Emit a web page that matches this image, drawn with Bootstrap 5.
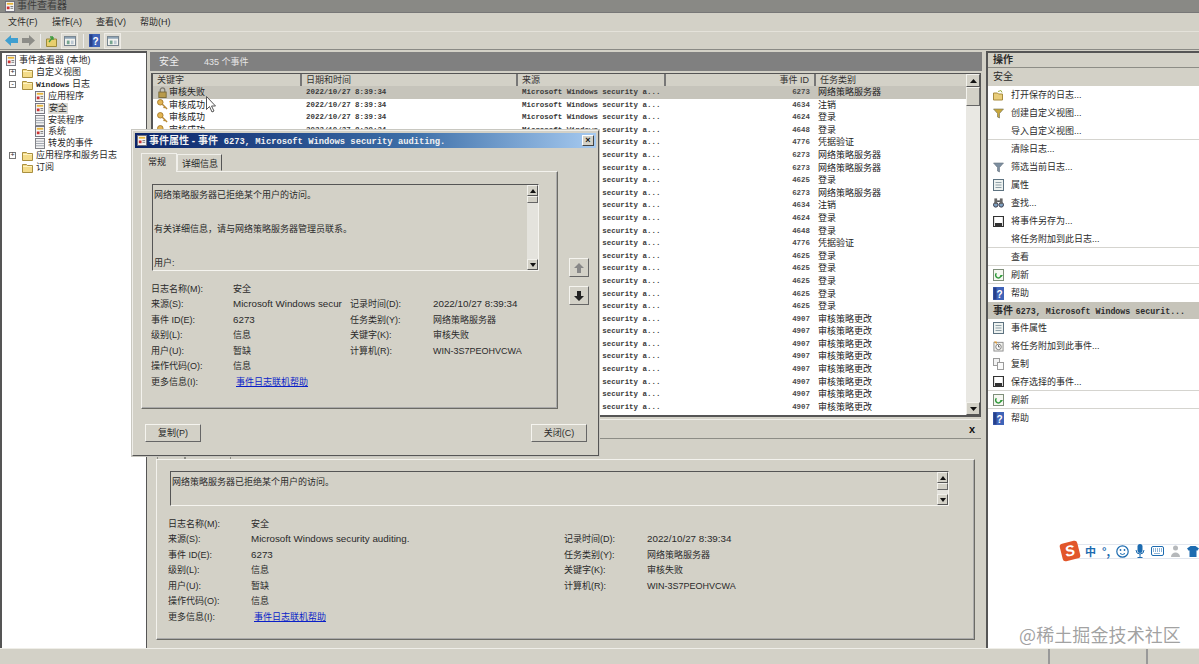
<!DOCTYPE html>
<html lang="zh-CN">
<head>
<meta charset="utf-8">
<title>事件查看器</title>
<link rel="stylesheet" href="https://cdn.jsdelivr.net/npm/bootstrap@5.3.0/dist/css/bootstrap.min.css">
<style>
html,body{height:664px;overflow:hidden}
body{background:#d3d1c7;color:#2a2a2a;font:9px/12px "Liberation Sans","Noto Sans CJK SC",sans-serif;position:relative}
svg{flex:none;display:block}
.lat{font-size:9.8px}
.monob{font:700 8px/11px "Liberation Mono",monospace}
.app-title{height:13px;background:#898985;color:#3c3c3c;padding-left:5px;gap:2px;border-bottom:1px solid #777;font-size:10px}
.app-menu{height:19px;background:#d3d1c7;padding-left:8px;gap:15px;border-bottom:1px solid #e4e2da}
.app-menu span{width:29px;white-space:nowrap}
.app-tools{height:18px;padding-left:5px;border-bottom:1px solid #8a8a85}
.tsep{width:1px;height:14px;background:#9a9a92;border-right:1px solid #eee;margin:0 5px}
.tog{width:17px;height:16px;background:#dedcd4;border:1px solid #eeece6;display:flex;align-items:center;justify-content:center}
.app-main{height:597px;margin-top:1px}
.pane-tree{width:147px;background:#fff;border:1px solid #555;border-width:2px 1px 0 2px;padding-top:2px;overflow:hidden}
.tr{height:11.85px;display:flex;align-items:center;gap:3px;white-space:nowrap;line-height:11px}
.tr.l0{padding-left:4px}.tr.l1{padding-left:7px}.tr.l2{padding-left:33px}
.exp{width:7px;height:7px;border:1px solid #777;font:7px/5px "Liberation Mono",monospace;text-align:center;margin-right:3px;flex:none}
.exp.none{border-color:transparent}
.tree-sel{background:#dcdad3;padding:0 1px}
.pane-mid{width:835px;margin:0 2px 0 2px;padding:0 3px 0 2px}
.mid-head{height:19px;background:#808080;color:#eee;padding-left:9px;gap:25px;margin-left:-1px;margin-right:-1px;margin-top:1px}
.mid-head b{font-weight:400;font-size:10px}.mid-head i{font:normal 9px "Liberation Sans","Noto Sans CJK SC",sans-serif;color:#e6e6e6}
.ev-frame{height:344px;margin-top:2px;background:#fff;border:2px solid #555;border-width:1px 1px 2px 2px;position:relative;overflow:hidden}
.ev-table{table-layout:fixed;width:814px;--bs-table-bg:transparent;font-size:9px;line-height:12px;margin:0;color:#222}
.ev-table th,.ev-table td{padding:0 0 0 3px;height:12.6px;border:0;white-space:nowrap;overflow:hidden;font-weight:400;vertical-align:middle;line-height:12.6px;box-shadow:none}
.ev-table th{height:12px;background:#d3d1c7;border-right:2px solid #777;line-height:11px;color:#333;padding-left:4px}
.ev-table td.mono{font:700 7.45px/12.6px "Liberation Mono",monospace;color:#3a3a3a;padding-left:5px}
.ev-table td.idc,.ev-table th.idc{text-align:right;padding:0 5px 0 0}
.ev-table td.idc{font:700 7.45px/12.6px "Liberation Mono",monospace;color:#4a4a4a}
.ev-table th.idc{font:9px/11px "Liberation Sans","Noto Sans CJK SC",sans-serif}
.ev-table td.kw{padding-left:4px}
.ev-table .kw>span{display:flex;align-items:center;gap:1px;height:12.6px}
.ev-table tr.sel td{background:#c6c4bb}
.ev-sb{position:absolute;right:0;top:0;bottom:0;width:14px;background:#e9e8e3;display:flex;flex-direction:column;justify-content:space-between}
.sb-btn{width:14px;height:13px;background:#d3d1c7;border:1px solid;border-color:#f2f1ec #555 #555 #f2f1ec;display:flex;align-items:center;justify-content:center;flex:none}
.sb-thumb{height:19px;background:#d3d1c7;border:1px solid;border-color:#f2f1ec #666 #666 #f2f1ec;width:14px;flex:none}
.sb-col{display:flex;flex-direction:column}
.det-head{height:20px;margin-top:2px;border-bottom:1px solid #8d8d86;position:relative;font-weight:700;padding-right:6px;border-top:1px solid #efeee9}
.det-x{font:700 11px/11px "Liberation Sans",sans-serif;color:#111}
.det-tabs{height:20px;padding-left:6px;align-items:flex-end}
.wtab{height:18px;padding:3px 4px;border:1px solid #8d8d86;border-bottom:0;background:#d3d1c7;white-space:nowrap}
.wpanel{border:1px solid;border-color:#f3f2ed #6b6b65 #6b6b65 #f3f2ed;box-shadow:inset -1px -1px #aaa}
.det-panel{height:181px;margin-left:5px;margin-right:6px;padding:11px 25px 0 13px}
.wbox{border:1px solid;border-color:#555 #f5f4ef #f5f4ef #555;position:relative}
.det-box{height:35px;padding:4px 1px}
.box-sb{position:absolute;right:0;top:0;bottom:0;width:11px;display:flex;flex-direction:column;justify-content:space-between;background:#e4e3dd}
.box-sb .sb-btn{width:11px;height:11px}.box-sb .sb-thumb{width:11px;height:7px}
.fields{display:grid;row-gap:0;grid-auto-rows:15.5px;white-space:nowrap;align-items:center;overflow:hidden}
.fields a{color:#0a1fc8;text-decoration:underline;margin-left:3px}
.f-det{grid-template-columns:83px 313px 83px 1fr;margin:10px 0 0 -2px}
.f-dlg{grid-template-columns:82px 117px 83px 1fr;margin:10px 0 0 -1px}
.pane-act{flex:1;background:#fff;border-left:2px solid #555;border-top:2px solid #555}
.ah{height:15px;background:#d3d1c7;border-bottom:1px solid #8d8d86;font-weight:700;font-size:10px;padding-left:5px;line-height:14px}
.as{height:18px;background:#d3d1c7;padding-left:5px;line-height:17px;font-size:10px}
.as2{height:17px;background:#c6c4ba;padding-left:5px;line-height:18px;white-space:nowrap;overflow:hidden;font-size:10px;font-weight:700}
.as2 em{font:normal 700 8.3px "Liberation Mono",monospace}
.dlg-title em{font:normal 700 8.8px "Liberation Mono",monospace;margin-left:3px}
.ai{height:18px;display:flex;align-items:center;padding-left:5px;white-space:nowrap}
.ai span{margin-left:7px}
.ai.noico{padding-left:23px}
.ai.noico span{margin-left:0}
.ai.sp{border-bottom:1px solid #d5d4cf}
.app-status{height:16px;background:#d3d1c7;border-top:1px solid #efeee8}
.st-a{width:1050px;border-right:2px solid #999}.st-b{width:98px;border-right:2px solid #999}
.dlg{position:absolute;left:132px;top:130px;width:467px;height:326px;background:#d3d1c7;border:1px solid;border-color:#efeee9 #555 #555 #efeee9;padding:2px;box-shadow:0 0 0 1px #c8c7c0}
.dlg-title{height:15px;background:linear-gradient(90deg,#0a246a,#3d6fa8 60%,#a6caf0);color:#f2f2f2;padding:0 2px;gap:2px;font-weight:700;white-space:nowrap;font-size:10px}
.dlg-x{margin-left:auto;width:12px;height:11px;background:#d3d1c7;border:1px solid;border-color:#fff #444 #444 #fff;color:#111;font:700 9px/8px "Liberation Sans",sans-serif;text-align:center}
.dlg-tabs{height:20px;padding-left:6px;align-items:flex-end;margin-top:3px}
.dlg-tabs .on{height:19px;padding:2px 6px;border:1px solid #f0efea;border-bottom:0;background:#d3d1c7;position:relative;z-index:1;margin-bottom:-1px;width:36px;white-space:nowrap}
.dlg-tabs .off{height:17px;padding:3px 4px;border:1px solid;border-color:#f0efea #555 #d3d1c7 #f0efea;width:45px;white-space:nowrap}
.dlg-panel{width:417px;height:238px;margin-left:6px;padding:12px 18px 0 10px}
.dlg-box{height:87px;padding:4px 1px}
.dlg-box p{margin:0;line-height:12px;height:34px}
.dlg-side{position:absolute;left:436px;top:127px;display:flex;flex-direction:column;gap:9px}
.nav-b{width:20px;height:19px;background:#d3d1c7;border:1px solid;border-color:#f5f4ef #666 #666 #f5f4ef;display:flex;align-items:center;justify-content:center}
.dlg-foot{padding:15px 9px 0 10px}
.wbtn{height:18px;width:56px;background:#d3d1c7;border:1px solid;border-color:#f5f4ef #666 #666 #f5f4ef;color:#2a2a2a;font:9px/14px "Liberation Sans","Noto Sans CJK SC",sans-serif;padding:0;border-radius:0}
.ime{position:absolute;left:1061px;top:541px;width:138px;height:20px}
.ime-bar{position:absolute;left:14px;right:0;top:3px;height:15px;background:#fff;border:1px solid #e2e6ee;border-right:0}
.ime-in{position:absolute;left:0;top:0;display:flex;align-items:center;height:20px;gap:6px}
.ime-s{width:18px;height:18px;background:#e2562a;border-radius:3px;transform:rotate(-14deg);color:#fff;font:italic 700 15px/17px "Liberation Sans",sans-serif;text-align:center}
.ime-t{color:#1c6bb0;font:700 11px/12px "Noto Sans CJK SC",sans-serif}
.wm{position:absolute;left:1019px;top:623px;font:18px/22px "Noto Sans CJK SC","Liberation Sans",sans-serif;color:rgba(120,120,120,.7);white-space:nowrap;letter-spacing:.1px}
.cursor{position:absolute;left:206px;top:96px}
</style>
</head>
<body>
<svg width="0" height="0" class="position-absolute">
<defs>
<symbol id="i-log" viewBox="0 0 11 12"><rect x=".5" y=".5" width="10" height="11" fill="#f4f4f4" stroke="#6c6c78"/><rect x="2" y="2" width="7" height="2" fill="#e8b53a"/><rect x="2" y="6" width="3" height="3" fill="#c33"/><path d="M6 6h3M6 8h3" stroke="#777"/></symbol>
<symbol id="i-list" viewBox="0 0 11 12"><rect x=".5" y=".5" width="10" height="11" fill="#f2f2f2" stroke="#77787e"/><path d="M1 3.5h9M1 6h9M1 8.5h9" stroke="#9aa0aa"/></symbol>
<symbol id="i-folder" viewBox="0 0 11 11"><path d="M.5 2.5h4l1 1h5v7H.5z" fill="#f4dc8a" stroke="#a98f3f"/><path d="M1 4.5h9" stroke="#fff3c2"/></symbol>
<symbol id="i-lock" viewBox="0 0 11 12"><path d="M3 6V3.5a2.5 2.5 0 015 0V6" fill="none" stroke="#7d7a70" stroke-width="1.4"/><rect x="1.5" y="5.5" width="8" height="6" fill="#b89a4a" stroke="#7a6a38"/></symbol>
<symbol id="i-key" viewBox="0 0 12 12"><circle cx="3.6" cy="3.6" r="3" fill="#e3b552" stroke="#a5792b"/><path d="M5.5 5.5l5.5 5.5M8.5 8.5l-1.3 1.3" stroke="#b98a35" stroke-width="1.6"/></symbol>
<symbol id="i-filter" viewBox="0 0 11 11"><path d="M.5 1h10L6.500 5.500V10l-2-1V5.500z" fill="#7d8fa0" stroke="#66727e" stroke-width=".6"/></symbol>
<symbol id="i-filter2" viewBox="0 0 11 11"><path d="M.5 1h10L6.500 5.500V10l-2-1V5.500z" fill="#c9a73c" stroke="#6d6f55" stroke-width=".6"/></symbol>
<symbol id="i-open" viewBox="0 0 11 11"><path d="M.5 3h4l1 1h4v6h-9z" fill="#e9cd7a" stroke="#a88c3d"/><path d="M5 1.500l3-1 1 2" fill="none" stroke="#9cb04b"/></symbol>
<symbol id="i-prop" viewBox="0 0 11 12"><rect x=".5" y=".5" width="10" height="11" fill="#eef2f0" stroke="#5d7280"/><path d="M2.500 3.500h6M2.500 6h6M2.500 8.500h6" stroke="#8fa0a8"/></symbol>
<symbol id="i-bino" viewBox="0 0 12 12"><circle cx="3" cy="8" r="2.500" fill="#7ea0c0" stroke="#334"/><circle cx="9" cy="8" r="2.500" fill="#7ea0c0" stroke="#334"/><rect x="1.500" y="1" width="3" height="6" fill="#666"/><rect x="7.500" y="1" width="3" height="6" fill="#666"/><path d="M4.500 4h3" stroke="#333" stroke-width="1.500"/></symbol>
<symbol id="i-save" viewBox="0 0 11 11"><rect x=".5" y=".5" width="10" height="10" fill="#fff" stroke="#333"/><rect x="2" y="7" width="7" height="3.500" fill="#333"/><path d="M.5 .5v10M10.500 .5v10" stroke="#333" stroke-width="1.300"/></symbol>
<symbol id="i-ref" viewBox="0 0 11 12"><rect x=".5" y=".5" width="10" height="11" fill="#f6f8f2" stroke="#7f8f7a"/><path d="M8 6.500A2.700 2.700 0 113.400 4.300" fill="none" stroke="#2f9a3a" stroke-width="1.500"/><path d="M7 6h3l-1.500 2z" fill="#2f9a3a"/></symbol>
<symbol id="i-help" viewBox="0 0 11 13"><rect width="11" height="13" fill="#3f63b8"/><rect x=".5" y=".5" width="3" height="12" fill="#27408a"/><text x="3.500" y="10.500" font-size="10" font-weight="700" fill="#fff" font-family="Liberation Sans">?</text></symbol>
<symbol id="i-task" viewBox="0 0 12 12"><rect x="1" y="2" width="10" height="9.500" fill="#f2f2ee" stroke="#8b8b8b"/><circle cx="6" cy="7" r="3" fill="#fff" stroke="#777"/><path d="M6 5v2h1.500" fill="none" stroke="#555"/><path d="M1 1l3 0 0 3z" fill="#e49a2e"/></symbol>
<symbol id="i-copy" viewBox="0 0 11 12"><rect x=".5" y=".5" width="6" height="7" fill="#f2f2f2" stroke="#9a9a9a"/><rect x="4.500" y="4.500" width="6" height="7" fill="#fafafa" stroke="#9a9a9a"/></symbol>
<symbol id="i-panel" viewBox="0 0 13 11"><rect x=".5" y=".5" width="12" height="10" fill="#f2f2ef" stroke="#6d7c88"/><rect x="1" y="1" width="11" height="2" fill="#8ea3b5"/><rect x="3" y="5" width="3" height="4" fill="#76a58f"/><rect x="7.500" y="5" width="3" height="4" fill="#bcc8d2"/></symbol>
</defs>
</svg>

<div class="app-title d-flex align-items-center"><svg width="10" height="11"><use href="#i-log"/></svg><span>事件查看器</span></div>
<div class="app-menu d-flex align-items-center"><span>文件(F)</span><span>操作(A)</span><span>查看(V)</span><span>帮助(H)</span></div>
<div class="app-tools d-flex align-items-center">
  <svg width="13" height="11" viewBox="0 0 13 11"><path d="M6 0v3h7v5H6v3L0 5.500z" fill="#3f9fd0"/></svg>
  <svg class="ms-1" width="13" height="11" viewBox="0 0 13 11"><path d="M7 0v3H0v5h7v3l6-5.500z" fill="#8d8d88"/></svg>
  <i class="tsep"></i>
  <svg width="11" height="12" viewBox="0 0 11 12"><path d="M.5 4h10v7.500H.5z" fill="#e8cf6e" stroke="#9c8a3a"/><path d="M3 7l4-5M7 2v3M7 2H4" stroke="#3e9a3e" fill="none" stroke-width="1.300"/></svg>
  <span class="tog ms-1"><svg width="12" height="10"><use href="#i-panel"/></svg></span>
  <i class="tsep"></i>
  <svg width="11" height="13"><use href="#i-help"/></svg>
  <span class="tog ms-1"><svg width="12" height="10"><use href="#i-panel"/></svg></span>
</div>

<div class="app-main d-flex">
  <nav class="pane-tree">
    <div class="tr l0"><svg width="10" height="11"><use href="#i-log"/></svg><span>事件查看器 (本地)</span></div>
    <div class="tr l1"><i class="exp">+</i><svg width="11" height="11"><use href="#i-folder"/></svg><span>自定义视图</span></div>
    <div class="tr l1"><i class="exp">-</i><svg width="11" height="11"><use href="#i-folder"/></svg><span><span class="monob">Windows</span> 日志</span></div>
    <div class="tr l2"><svg width="10" height="11"><use href="#i-log"/></svg><span>应用程序</span></div>
    <div class="tr l2"><svg width="10" height="11"><use href="#i-log"/></svg><span class="tree-sel">安全</span></div>
    <div class="tr l2"><svg width="10" height="11"><use href="#i-list"/></svg><span>安装程序</span></div>
    <div class="tr l2"><svg width="10" height="11"><use href="#i-log"/></svg><span>系统</span></div>
    <div class="tr l2"><svg width="10" height="11"><use href="#i-list"/></svg><span>转发的事件</span></div>
    <div class="tr l1"><i class="exp">+</i><svg width="11" height="11"><use href="#i-folder"/></svg><span>应用程序和服务日志</span></div>
    <div class="tr l1"><i class="exp none"></i><svg width="11" height="11"><use href="#i-folder"/></svg><span>订阅</span></div>
  </nav>

  <section class="pane-mid">
    <div class="mid-head d-flex align-items-center"><b>安全</b><i>435 个事件</i></div>
    <div class="ev-frame">
      <table class="table table-borderless ev-table">
        <colgroup><col style="width:148px"><col style="width:216px"><col style="width:148px"><col style="width:150px"><col style="width:152px"></colgroup>
        <thead><tr><th>关键字</th><th>日期和时间</th><th>来源</th><th class="idc">事件 ID</th><th>任务类别</th></tr></thead>
        <tbody id="rows"></tbody>
      </table>
      <div class="ev-sb"><div class="sb-col"><div class="sb-btn"><svg width="7" height="4"><path d="M3.500 0L7 4H0z" fill="#111"/></svg></div><div class="sb-thumb"></div></div><div class="sb-btn"><svg width="7" height="4"><path d="M0 0h7L3.500 4z" fill="#111"/></svg></div></div>
    </div>
    <div class="det-head d-flex align-items-center justify-content-end"><span class="det-x">x</span></div>
    <div class="det-tabs d-flex"><span class="wtab">常规</span><span class="wtab">详细信息</span></div>
    <div class="wpanel det-panel">
      <div class="wbox det-box">网络策略服务器已拒绝某个用户的访问。
        <div class="box-sb"><div class="sb-col"><div class="sb-btn"><svg width="6" height="4"><path d="M3 0l3 4H0z" fill="#111"/></svg></div><div class="sb-thumb"></div></div><div class="sb-btn"><svg width="6" height="4"><path d="M0 0h6L3 4z" fill="#111"/></svg></div></div>
      </div>
      <div class="fields f-det">
        <span>日志名称(M):</span><span>安全</span><span></span><span></span>
        <span>来源(S):</span><span class="lat">Microsoft Windows security auditing.</span><span>记录时间(D):</span><span class="lat">2022/10/27 8:39:34</span>
        <span>事件 ID(E):</span><span class="lat">6273</span><span>任务类别(Y):</span><span>网络策略服务器</span>
        <span>级别(L):</span><span>信息</span><span>关键字(K):</span><span>审核失败</span>
        <span>用户(U):</span><span>暂缺</span><span>计算机(R):</span><span>WIN-3S7PEOHVCWA</span>
        <span>操作代码(O):</span><span>信息</span><span></span><span></span>
        <span>更多信息(I):</span><span><a href="#">事件日志联机帮助</a></span><span></span><span></span>
      </div>
    </div>
  </section>

  <aside class="pane-act">
    <div class="ah">操作</div>
    <div class="as">安全</div>
    <div class="ai"><svg width="11" height="11"><use href="#i-open"/></svg><span>打开保存的日志...</span></div>
    <div class="ai"><svg width="11" height="11"><use href="#i-filter2"/></svg><span>创建自定义视图...</span></div>
    <div class="ai noico sp"><span>导入自定义视图...</span></div>
    <div class="ai noico"><span>清除日志...</span></div>
    <div class="ai"><svg width="11" height="11"><use href="#i-filter"/></svg><span>筛选当前日志...</span></div>
    <div class="ai"><svg width="11" height="12"><use href="#i-prop"/></svg><span>属性</span></div>
    <div class="ai"><svg width="11" height="12"><use href="#i-bino"/></svg><span>查找...</span></div>
    <div class="ai"><svg width="11" height="11"><use href="#i-save"/></svg><span>将事件另存为...</span></div>
    <div class="ai noico sp"><span>将任务附加到此日志...</span></div>
    <div class="ai noico sp"><span>查看</span></div>
    <div class="ai sp"><svg width="11" height="12"><use href="#i-ref"/></svg><span>刷新</span></div>
    <div class="ai"><svg width="11" height="13"><use href="#i-help"/></svg><span>帮助</span></div>
    <div class="as2">事件 <em>6273, Microsoft Windows securit...</em></div>
    <div class="ai"><svg width="11" height="12"><use href="#i-prop"/></svg><span>事件属性</span></div>
    <div class="ai"><svg width="11" height="12"><use href="#i-task"/></svg><span>将任务附加到此事件...</span></div>
    <div class="ai"><svg width="11" height="12"><use href="#i-copy"/></svg><span>复制</span></div>
    <div class="ai sp"><svg width="11" height="11"><use href="#i-save"/></svg><span>保存选择的事件...</span></div>
    <div class="ai sp"><svg width="11" height="12"><use href="#i-ref"/></svg><span>刷新</span></div>
    <div class="ai"><svg width="11" height="13"><use href="#i-help"/></svg><span>帮助</span></div>
  </aside>
</div>
<div class="app-status d-flex"><div class="st-a"></div><div class="st-b"></div></div>

<svg class="cursor" width="11" height="17" viewBox="0 0 11 17"><path d="M.5.500v13l3-3 2.500 5.500 2-1-2.500-5h4z" fill="#fff" stroke="#555"/></svg>

<div class="dlg" role="dialog">
  <div class="dlg-title d-flex align-items-center"><svg width="10" height="11"><use href="#i-log"/></svg><span>事件属性 - 事件 <em>6273, Microsoft Windows security auditing.</em></span><span class="dlg-x">×</span></div>
  <div class="dlg-tabs d-flex"><span class="on">常规</span><span class="off">详细信息</span></div>
  <div class="wpanel dlg-panel">
    <div class="wbox dlg-box">
      <p>网络策略服务器已拒绝某个用户的访问。</p>
      <p>有关详细信息，请与网络策略服务器管理员联系。</p>
      <p>用户:</p>
      <div class="box-sb"><div class="sb-col"><div class="sb-btn"><svg width="6" height="4"><path d="M3 0l3 4H0z" fill="#111"/></svg></div><div class="sb-thumb"></div></div><div class="sb-btn"><svg width="6" height="4"><path d="M0 0h6L3 4z" fill="#111"/></svg></div></div>
    </div>
    <div class="fields f-dlg">
      <span>日志名称(M):</span><span>安全</span><span></span><span></span>
      <span>来源(S):</span><span class="lat">Microsoft Windows secur</span><span>记录时间(D):</span><span class="lat">2022/10/27 8:39:34</span>
      <span>事件 ID(E):</span><span class="lat">6273</span><span>任务类别(Y):</span><span>网络策略服务器</span>
      <span>级别(L):</span><span>信息</span><span>关键字(K):</span><span>审核失败</span>
      <span>用户(U):</span><span>暂缺</span><span>计算机(R):</span><span>WIN-3S7PEOHVCWA</span>
      <span>操作代码(O):</span><span>信息</span><span></span><span></span>
      <span>更多信息(I):</span><span><a href="#">事件日志联机帮助</a></span><span></span><span></span>
    </div>
  </div>
  <div class="dlg-side">
    <div class="nav-b"><svg width="10" height="10"><path d="M5 0l5 5H7v5H3V5H0z" fill="#888"/></svg></div>
    <div class="nav-b"><svg width="10" height="10"><path d="M3 0h4v5h3l-5 5-5-5h3z" fill="#222"/></svg></div>
  </div>
  <div class="dlg-foot d-flex justify-content-between"><button class="btn wbtn" type="button">复制(P)</button><button class="btn wbtn" type="button">关闭(C)</button></div>
</div>

<div class="ime">
  <div class="ime-bar"></div>
  <div class="ime-in">
    <div class="ime-s">S</div>
    <span class="ime-t">中</span>
    <span class="ime-t">°,</span>
    <svg width="13" height="13"><circle cx="6.500" cy="6.500" r="5.700" fill="#fff" stroke="#1c6bb0" stroke-width="1.200"/><circle cx="4.500" cy="5" r=".9" fill="#1c6bb0"/><circle cx="8.500" cy="5" r=".9" fill="#1c6bb0"/><path d="M4 8.500q2.500 2 5 0" fill="none" stroke="#1c6bb0"/></svg>
    <svg width="10" height="14"><rect x="2.500" y="0" width="5" height="9" rx="2.500" fill="#1c6bb0"/><path d="M1 6a4 4 0 008 0M5 10v3M2.500 13.500h5" fill="none" stroke="#1c6bb0"/></svg>
    <svg width="13" height="10"><rect x=".5" y=".5" width="12" height="9" rx="1.500" fill="#fff" stroke="#1c6bb0"/><path d="M2 3h9M2 5h9M3.500 7.500h6" stroke="#1c6bb0" stroke-dasharray="1 1"/></svg>
    <svg width="11" height="12"><circle cx="5.500" cy="3" r="2.500" fill="#b5b8bb"/><path d="M1 12c0-6 9-6 9 0z" fill="#b5b8bb"/></svg>
    <svg width="12" height="11"><path d="M3.500 0h5L12 2.500 10 5 9.500 4v7h-7V4L2 5 0 2.500z" fill="#1c6bb0"/></svg>
  </div>
</div>
<div class="wm">@稀土掘金技术社区</div>

<script src="https://cdn.jsdelivr.net/npm/bootstrap@5.3.0/dist/js/bootstrap.bundle.min.js"></script>
<script>
var d=[["审核失败",6273,"网络策略服务器"],["审核成功",4634,"注销"],["审核成功",4624,"登录"],["审核成功",4648,"登录"],["审核成功",4776,"凭据验证"],["审核成功",6273,"网络策略服务器"],["审核成功",6273,"网络策略服务器"],["审核成功",4625,"登录"],["审核成功",6273,"网络策略服务器"],["审核成功",4634,"注销"],["审核成功",4624,"登录"],["审核成功",4648,"登录"],["审核成功",4776,"凭据验证"],["审核成功",4625,"登录"],["审核成功",4625,"登录"],["审核成功",4625,"登录"],["审核成功",4625,"登录"],["审核成功",4625,"登录"]];
for(var i=0;i<8;i++)d.push(["审核成功",4907,"审核策略更改"]);
document.getElementById("rows").innerHTML=d.map(function(r,i){
 return '<tr class="'+(i?'':'sel')+'"><td class="kw"><span><svg width="11" height="11"><use href="#'+(i?'i-key':'i-lock')+'"/></svg>'+r[0]+'</span></td><td class="mono">2022/10/27 8:39:34</td><td class="mono">Microsoft Windows security a...</td><td class="idc">'+r[1]+'</td><td>'+r[2]+'</td></tr>';
}).join("");
</script>
</body>
</html>
